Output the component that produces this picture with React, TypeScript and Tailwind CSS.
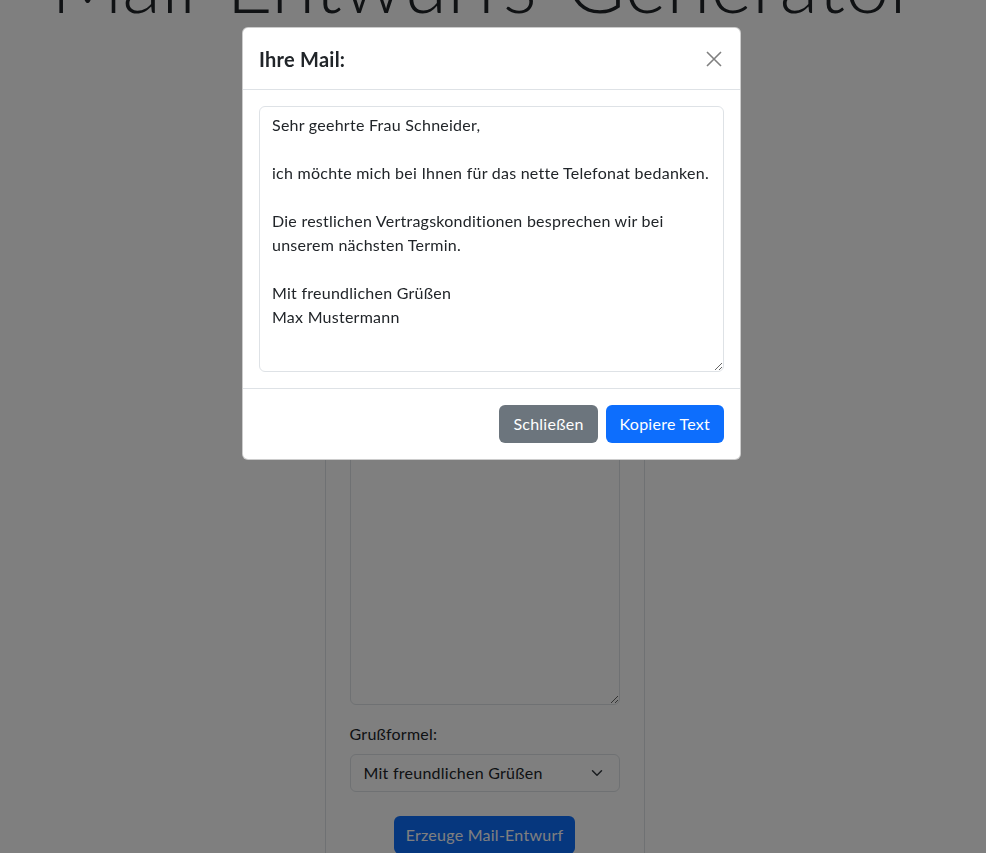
import { useState } from "react";

const mailText = `Sehr geehrte Frau Schneider,

ich möchte mich bei Ihnen für das nette Telefonat bedanken.

Die restlichen Vertragskonditionen besprechen wir bei unserem nächsten Termin.

Mit freundlichen Grüßen
Max Mustermann`;

function CloseIcon() {
  return (
    <svg width="16" height="16" viewBox="0 0 16 16" fill="none">
      <path d="M1 1L15 15M15 1L1 15" stroke="#808080" strokeWidth="1.6" />
    </svg>
  );
}

function Chevron() {
  return (
    <svg width="12" height="12" viewBox="0 0 16 16" fill="none">
      <path d="M2 5l6 6 6-6" stroke="#343a40" strokeWidth="2" strokeLinecap="round" strokeLinejoin="round" />
    </svg>
  );
}

export default function App() {
  const [text, setText] = useState(mailText);

  return (
    <div className="relative h-[853px] overflow-hidden bg-white font-['Lato','Liberation_Sans',sans-serif] tracking-[0.25px] text-[#212529]">
      {/* page below the modal */}
      <div className="flex flex-col items-center pr-[17px]">
        <h1 className="mt-[-66px] text-[80px] font-light leading-[96px] tracking-normal whitespace-nowrap">
          Mail-Entwurfs-Generator
        </h1>
        <div className="mt-[20px] flex w-[320px] flex-col border border-[#dee2e6] px-[24px] pt-[24px] pb-[40px]">
          <label className="mb-2">Anrede:</label>
          <select className="h-[38px] rounded-md border border-[#dee2e6] px-3">
            <option>Sehr geehrte Frau</option>
          </select>
          <label className="mt-4 mb-2">Ihr Text:</label>
          <textarea className="h-[512px] resize-y rounded-md border border-[#dee2e6] px-3 py-1.5" />
          <label className="mt-[17px] mb-[8px] leading-6">Grußformel:</label>
          <div className="flex h-[38px] items-center justify-between rounded-md border border-[#dee2e6] pr-[16px] pl-[13px]">
            <span>Mit freundlichen Grüßen</span>
            <Chevron />
          </div>
          <div className="mt-[24px] flex justify-center">
            <button className="h-[38px] rounded-md bg-[#0d6efd] px-3 text-white">
              Erzeuge Mail-Entwurf
            </button>
          </div>
        </div>
      </div>

      {/* modal */}
      <div className="fixed inset-0 z-10 bg-black/50">
        <div className="ml-[242px] mt-[27px] w-[499px] overflow-hidden rounded-md border border-black/20 bg-white">
          <div className="flex h-[62px] items-center justify-between border-b border-[#dee2e6] pr-[14px] pl-[16px]">
            <h5 className="text-[20px] font-bold leading-6">Ihre Mail:</h5>
            <button className="flex h-6 w-6 items-center justify-center">
              <CloseIcon />
            </button>
          </div>
          <div className="p-4">
            <textarea
              value={text}
              onChange={(e) => setText(e.target.value)}
              className="block h-[266px] w-full resize-y rounded-md border border-[#dee2e6] px-3 py-1.5 text-base leading-6 outline-none"
            />
          </div>
          <div className="flex justify-end gap-2 border-t border-[#dee2e6] p-4">
            <button className="h-[38px] rounded-md bg-[#6c757d] px-[14px] text-white">Schließen</button>
            <button className="h-[38px] rounded-md bg-[#0d6efd] px-[14px] text-white">Kopiere Text</button>
          </div>
        </div>
      </div>
    </div>
  );
}
